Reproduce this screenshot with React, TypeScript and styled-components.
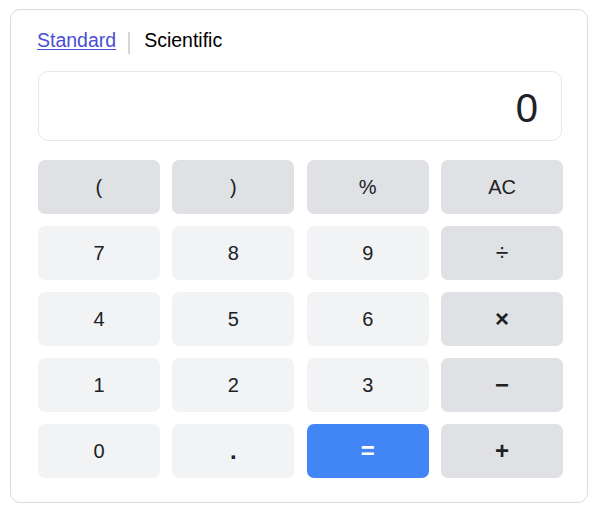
import React from "react";
import styled, { createGlobalStyle } from "styled-components";

const Global = createGlobalStyle`
  html, body { margin: 0; padding: 0; background: #ffffff; }
  body { font-family: "Liberation Sans", Arial, sans-serif; color: #202124; }
`;

const Card = styled.div`
  box-sizing: border-box;
  margin: 9px 0 0 10px;
  width: 578px;
  height: 494px;
  border: 1px solid #dadce0;
  border-radius: 10px;
  padding: 14px 24px 24px 27px;
  display: flex;
  flex-direction: column;
`;

const Tabs = styled.div`
  display: flex;
  align-items: center;
  height: 34px;
  margin-left: -1px;
  font-size: 19.5px;
`;

const TabLink = styled.a`
  color: #4b4fd4;
  text-decoration: underline;
  text-underline-offset: 2px;
  cursor: pointer;
`;

const TabSep = styled.span`
  display: inline-block;
  width: 2px;
  height: 22px;
  background: #d6d6d6;
  margin: 4px 14px 0 12px;
`;

const TabText = styled.span`
  color: #000000;
`;

const Display = styled.div`
  box-sizing: border-box;
  margin-top: 14px;
  height: 71px;
  width: 524px;
  border: 1px solid #e6e8eb;
  border-radius: 10px;
  display: flex;
  align-items: center;
  justify-content: flex-end;
  padding: 4px 23px 0 0;
  font-size: 40px;
  color: #202124;
`;

const Grid = styled.div`
  margin-top: 19px;
  width: 525px;
  display: grid;
  grid-template-columns: repeat(4, 1fr);
  grid-auto-rows: 54px;
  column-gap: 12.5px;
  row-gap: 12px;
`;

type Kind = "num" | "op" | "eq";

const Key = styled.button<{ $kind: Kind; $bold?: boolean; $size?: number }>`
  border: none;
  border-radius: 7px;
  font-family: "Liberation Sans", Arial, sans-serif;
  font-size: ${(p) => p.$size ?? 20}px;
  font-weight: ${(p) => (p.$bold ? 700 : 400)};
  background: ${(p) =>
    p.$kind === "eq" ? "#4285f4" : p.$kind === "op" ? "#dfe1e5" : "#f1f3f4"};
  color: ${(p) => (p.$kind === "eq" ? "#ffffff" : "#202124")};
  display: flex;
  align-items: center;
  justify-content: center;
  padding: 0;
  cursor: pointer;
`;

type K = { label: string; kind: Kind; bold?: boolean; size?: number };

const keys: K[] = [
  { label: "(", kind: "op" },
  { label: ")", kind: "op" },
  { label: "%", kind: "op" },
  { label: "AC", kind: "op" },
  { label: "7", kind: "num" },
  { label: "8", kind: "num" },
  { label: "9", kind: "num" },
  { label: "÷", kind: "op", size: 23 },
  { label: "4", kind: "num" },
  { label: "5", kind: "num" },
  { label: "6", kind: "num" },
  { label: "×", kind: "op", bold: true, size: 24 },
  { label: "1", kind: "num" },
  { label: "2", kind: "num" },
  { label: "3", kind: "num" },
  { label: "−", kind: "op", bold: true, size: 24 },
  { label: "0", kind: "num" },
  { label: ".", kind: "num", bold: true, size: 24 },
  { label: "=", kind: "eq", bold: true, size: 24 },
  { label: "+", kind: "op", bold: true, size: 24 },
];

export default function App() {
  return (
    <>
      <Global />
      <Card>
        <Tabs>
          <TabLink>Standard</TabLink>
          <TabSep />
          <TabText>Scientific</TabText>
        </Tabs>
        <Display>0</Display>
        <Grid>
          {keys.map((k) => (
            <Key key={k.label} $kind={k.kind} $bold={k.bold} $size={k.size}>
              {k.label}
            </Key>
          ))}
        </Grid>
      </Card>
    </>
  );
}
